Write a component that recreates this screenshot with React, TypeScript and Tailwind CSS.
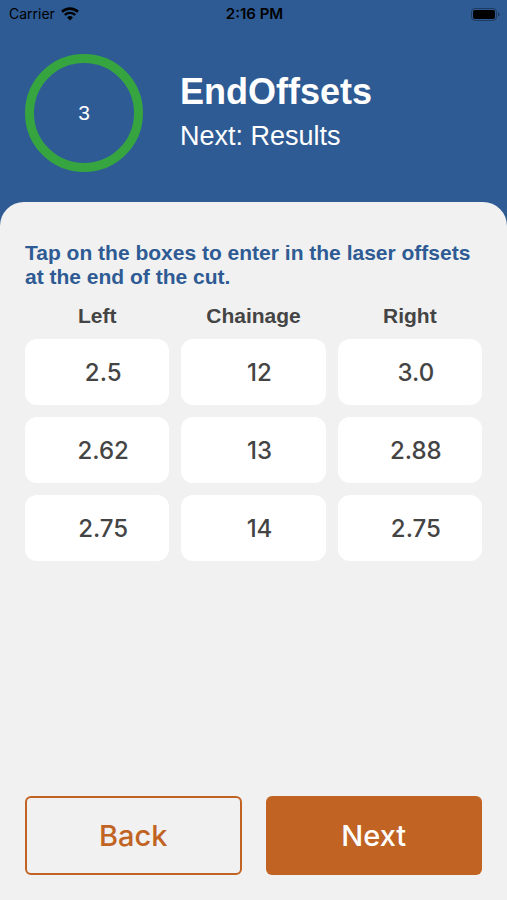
import { useState } from 'react'

const columns = ['Left', 'Chainage', 'Right']

const initialRows = [
  ['2.5', '12', '3.0'],
  ['2.62', '13', '2.88'],
  ['2.75', '14', '2.75'],
]

function WifiIcon() {
  return (
    <svg width="18" height="14" viewBox="0 0 18 14" fill="none" aria-hidden="true">
      <path d="M1 4.8a11.6 11.6 0 0 1 16 0" stroke="#000" strokeWidth="2.6" />
      <path d="M3.8 8a7.4 7.4 0 0 1 10.4 0" stroke="#000" strokeWidth="2.4" />
      <path d="M9 13.6 6.1 10.5a4.2 4.2 0 0 1 5.8 0Z" fill="#000" />
    </svg>
  )
}

function BatteryIcon() {
  return (
    <svg width="29" height="13" viewBox="0 0 29 13" fill="none" aria-hidden="true">
      <rect x="0.5" y="0.5" width="25" height="12" rx="3.5" stroke="#000" strokeOpacity="0.35" />
      <rect x="2" y="2" width="22" height="9" rx="2" fill="#000" />
      <path d="M27 4.5c1 .3 1.6 1.1 1.6 2s-.6 1.7-1.6 2Z" fill="#000" fillOpacity="0.4" />
    </svg>
  )
}

function StatusBar() {
  return (
    <div className="grid h-7 grid-cols-3 items-center pr-[7px] pl-[9px] font-[Inter,sans-serif] text-sm text-black">
      <div className="flex items-center gap-1.5">
        <span>Carrier</span>
        <WifiIcon />
      </div>
      <span className="text-center text-[15px] font-semibold">2:16 PM</span>
      <div className="flex justify-end">
        <BatteryIcon />
      </div>
    </div>
  )
}

export default function App() {
  const [rows, setRows] = useState(initialRows)

  const updateCell = (row: number, col: number, value: string) => {
    setRows(rows.map((r, i) => (i === row ? r.map((v, j) => (j === col ? value : v)) : r)))
  }

  return (
    <div className="flex min-h-screen flex-col bg-[#2e5b94] font-['Liberation_Sans',Arial,sans-serif]">
      <StatusBar />

      <header className="flex items-center gap-[37px] px-[25px] pt-[26px] pb-[30px] text-white">
        <div className="flex size-[118px] shrink-0 items-center justify-center rounded-full border-[9px] border-[#36a540] text-[21px]">
          3
        </div>
        <div className="pt-0.5">
          <h1 className="text-[36px] leading-[44px] font-bold">EndOffsets</h1>
          <p className="text-[27px] leading-[44px]">Next: Results</p>
        </div>
      </header>

      <main className="flex flex-1 flex-col rounded-t-[24px] bg-[#f1f1f1] px-[25px] pt-[39px] pb-[25px]">
        <p className="text-[21px] leading-6 font-bold text-[#2e5b94]">
          Tap on the boxes to enter in the laser offsets at the end of the cut.
        </p>

        <div className="-mx-3">
          <table className="w-full table-fixed border-separate border-spacing-3">
            <thead>
              <tr>
                {columns.map((column) => (
                  <th key={column} scope="col" className="p-0 pt-1 text-[21px] leading-[22px] font-bold text-[#444444]">
                    {column}
                  </th>
                ))}
              </tr>
            </thead>
            <tbody>
              {rows.map((row, i) => (
                <tr key={i}>
                  {row.map((value, j) => (
                    <td key={columns[j]} className="p-0">
                      <input
                        type="text"
                        inputMode="decimal"
                        aria-label={`${columns[j]} ${i + 1}`}
                        value={value}
                        onChange={(e) => updateCell(i, j, e.target.value)}
                        className="block h-[66px] w-full rounded-[12px] bg-white pl-3 text-center font-[Inter,sans-serif] text-2xl font-medium text-[#444444] outline-none"
                      />
                    </td>
                  ))}
                </tr>
              ))}
            </tbody>
          </table>
        </div>

        <div className="mt-auto grid grid-cols-2 gap-6 font-[Inter,sans-serif] text-[29px] font-medium">
          <button type="button" className="h-[79px] rounded-md border-2 border-[#c06323] text-[#c06323]">
            Back
          </button>
          <button type="button" className="h-[79px] rounded-md bg-[#c06323] text-white">
            Next
          </button>
        </div>
      </main>
    </div>
  )
}
